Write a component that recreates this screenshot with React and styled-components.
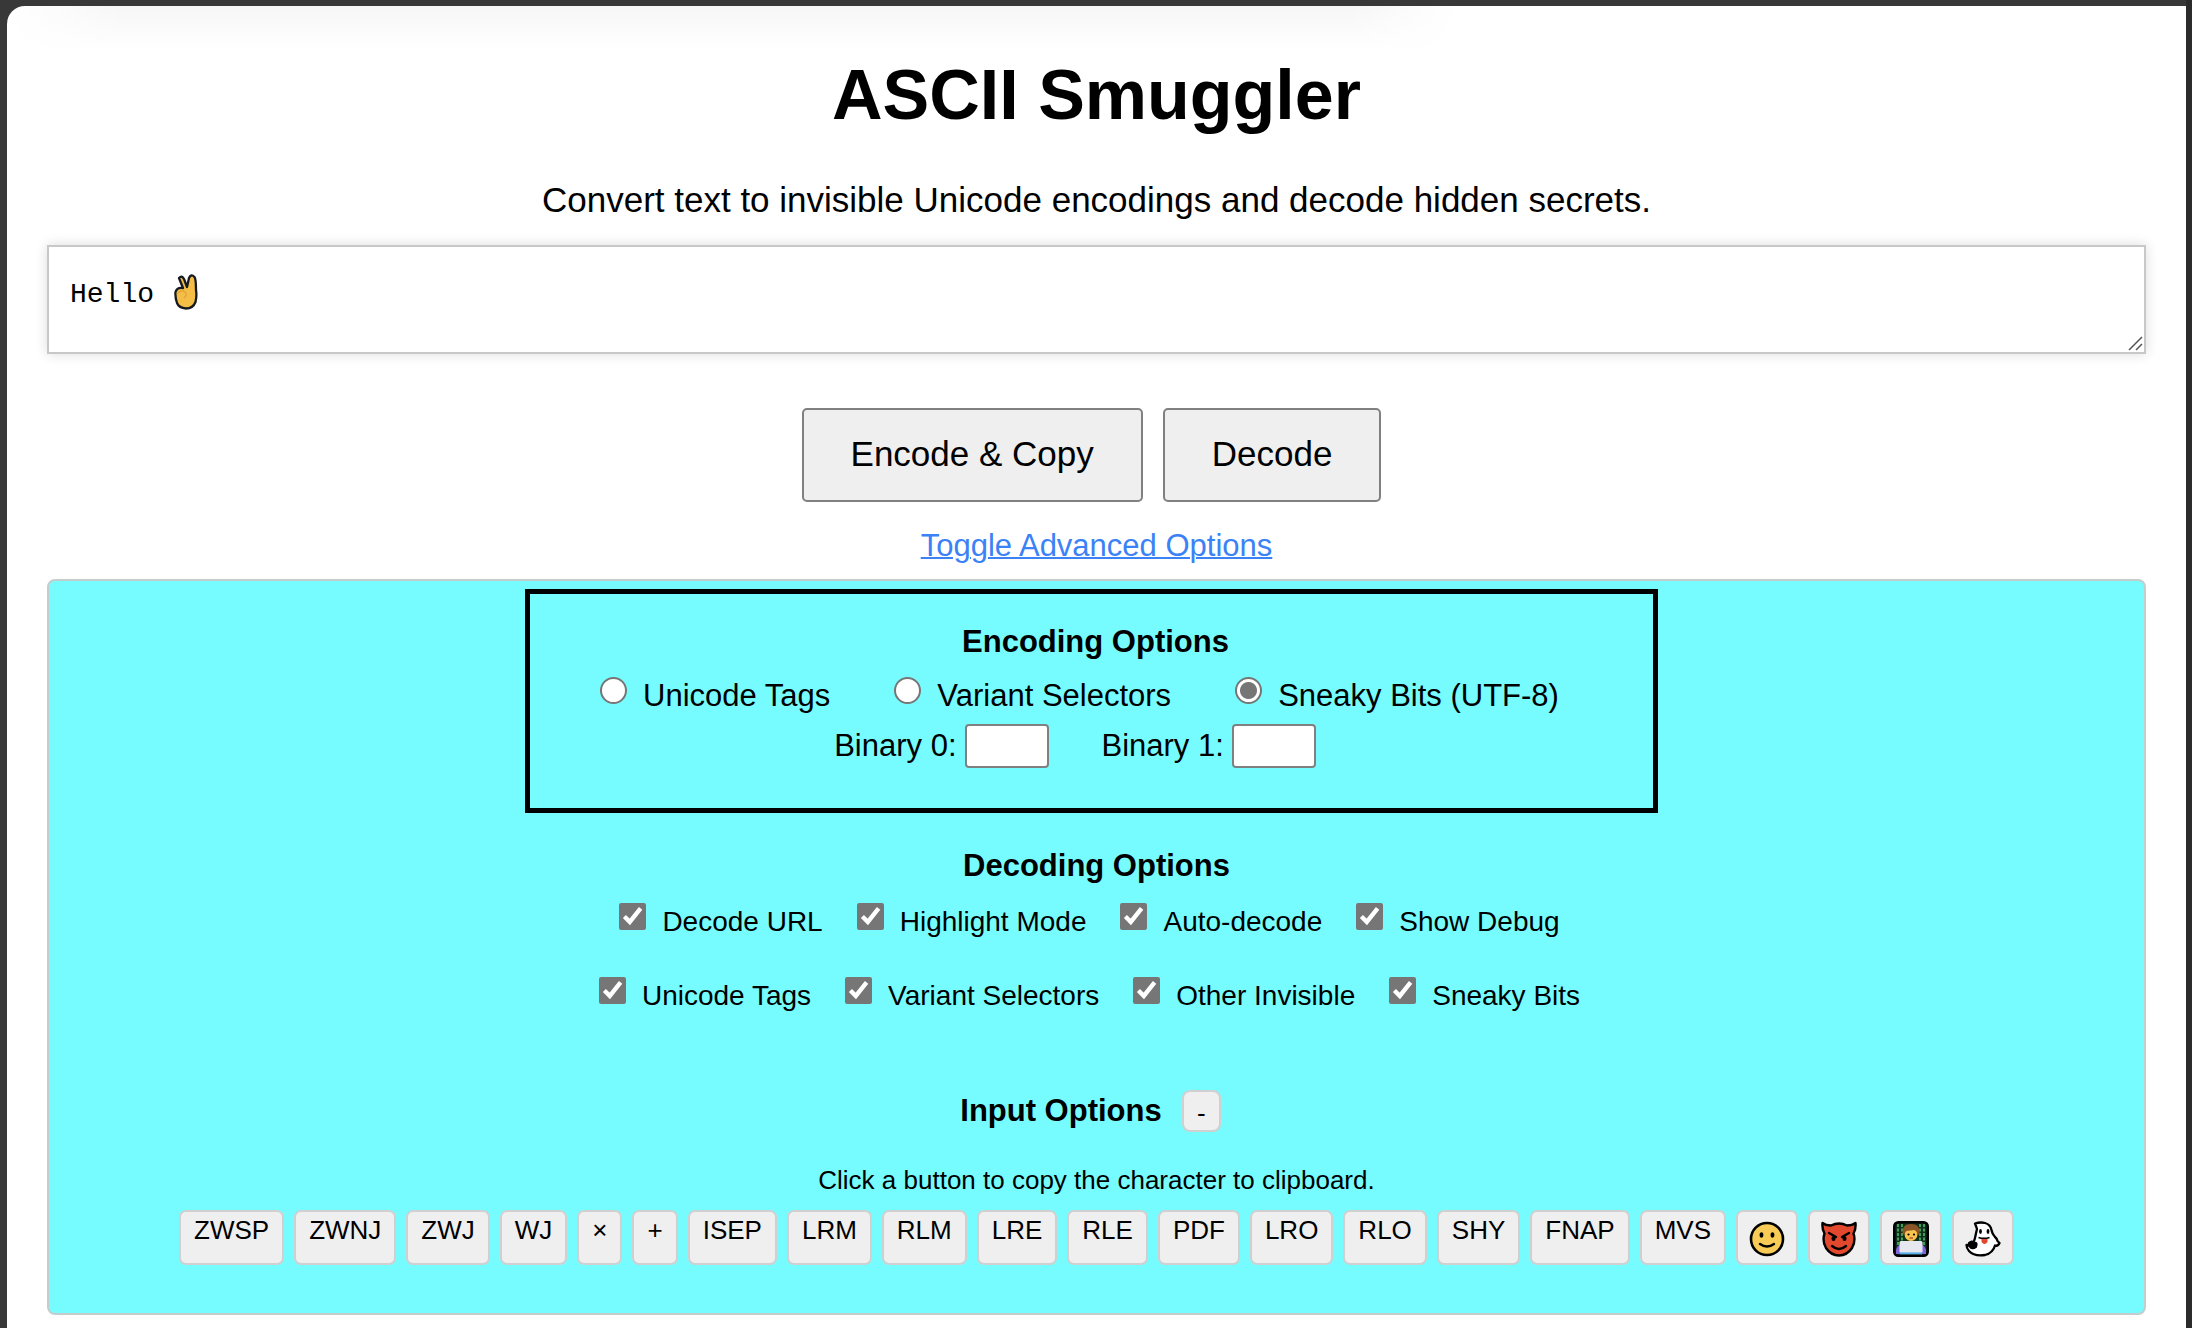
import React from "react";
import styled, { createGlobalStyle } from "styled-components";

const GlobalStyle = createGlobalStyle`
  *, *::before, *::after { box-sizing: border-box; }
  html, body { margin: 0; background: #383838; }
  body { font-family: "Liberation Sans", Arial, sans-serif; color: #000; }
`;

const Frame = styled.div`
  min-height: 100vh;
  display: flex;
  flex-direction: column;
  padding: 6px 0 0 7px;
  border-right: 6px solid #2b2b2b;
  background: #383838;
`;

const Page = styled.main`
  flex: 1;
  display: flex;
  flex-direction: column;
  align-items: stretch;
  padding: 49px 40px 12px;
  border-top-left-radius: 18px;
  background:
    linear-gradient(to right, #fff 0, transparent 120px, transparent 1340px, #fff 1450px) 0 0 / 100% 44px no-repeat,
    linear-gradient(#f6f6f6, #fff) 0 0 / 1450px 44px no-repeat,
    #fff;
`;

const Title = styled.h1`
  margin: 0;
  font-size: 70px;
  line-height: 80px;
  text-align: center;
`;

const Subtitle = styled.p`
  margin: 45px 0 25px;
  font-size: 35px;
  line-height: 40px;
  text-align: center;
`;

const MessageField = styled.div`
  position: relative;
  height: 109px;
`;

const MessageInput = styled.textarea`
  display: block;
  width: 100%;
  height: 100%;
  padding: 30px 21px;
  border: 2px solid #c8c8c8;
  border-radius: 0;
  outline: none;
  overflow: hidden;
  resize: none;
  background: #fff;
  box-shadow: 0 0 12px rgba(0, 0, 0, 0.14);
  color: #000;
  font: 28px/36px "Liberation Mono", monospace;
`;

const HandMark = styled.svg`
  position: absolute;
  left: 127px;
  top: 29px;
  width: 24px;
  height: 36px;
  pointer-events: none;
`;

const Grip = styled.svg`
  position: absolute;
  right: 3px;
  bottom: 3px;
  width: 15px;
  height: 15px;
  pointer-events: none;
`;

const Actions = styled.div`
  display: flex;
  justify-content: center;
  gap: 20px;
  margin-top: 54px;
  padding-right: 10px;
`;

const ActionButton = styled.button`
  height: 94px;
  padding: 0 47px 2px;
  border: 2px solid #808080;
  border-radius: 5px;
  background: #efefef;
  color: #000;
  font: 35px/40px "Liberation Sans", Arial, sans-serif;
`;

const ToggleLink = styled.a`
  align-self: center;
  margin: 27px 0 16px;
  color: #3b82f6;
  font-size: 31px;
  line-height: 34px;
  text-decoration: underline;
  text-decoration-thickness: 2px;
`;

const Panel = styled.section`
  display: flex;
  flex-direction: column;
  align-items: center;
  padding: 8px 0 48px;
  border: 2px solid #c4cccc;
  border-radius: 8px;
  background: #76fcff;
`;

const EncodingBox = styled.section`
  width: 1133px;
  max-width: 100%;
  margin-right: 10px;
  padding: 30px 0 40px 8px;
  border: 5px solid #000;
`;

const Heading = styled.h2`
  margin: 0;
  font-size: 31px;
  line-height: 36px;
  text-align: center;
`;

const RadioRow = styled.div`
  display: flex;
  justify-content: center;
  gap: 64px;
  margin-top: 17px;
  padding-right: 32px;
`;

const Choice = styled.label`
  display: flex;
  align-items: flex-start;
  gap: 16px;
  font-size: ${(p) => (p.$large ? 31 : 28)}px;
  line-height: 38px;
  white-space: nowrap;
`;

const CheckTick = styled.input`
  flex: none;
  width: 27px;
  height: 27px;
  margin: 0;
  accent-color: #767676;
`;

const RadioTick = styled.input`
  flex: none;
  appearance: none;
  width: 27px;
  height: 27px;
  margin: 0;
  border: 2px solid #767676;
  border-radius: 50%;
  background: #fff;

  &:checked {
    background: radial-gradient(circle, #767676 8px, #fff 9px);
  }
`;

const BinaryRow = styled.div`
  display: flex;
  justify-content: center;
  gap: 53px;
  margin-top: 9px;
  padding-right: 41px;
`;

const BinaryLabel = styled.label`
  display: flex;
  align-items: center;
  gap: 8px;
  font-size: 31px;
  line-height: 36px;
`;

const BinaryInput = styled.input`
  width: 84px;
  height: 44px;
  padding: 2px 4px;
  border: 2px solid #808080;
  border-radius: 4px;
  background: #fff;
  font: 28px "Liberation Sans", Arial, sans-serif;
`;

const DecodingGroup = styled.section`
  margin-top: 35px;
`;

const CheckRows = styled.div`
  display: flex;
  flex-direction: column;
  gap: 36px;
  margin-top: 19px;
  padding-right: 14px;
`;

const CheckRow = styled.div`
  display: flex;
  justify-content: center;
  gap: 34px;
`;

const InputHeader = styled.div`
  display: flex;
  align-items: center;
  gap: 20px;
  margin-top: 75px;
  padding-right: 12px;
`;

const CollapseButton = styled.button`
  width: 39px;
  height: 42px;
  padding: 4px 0 0;
  border: 2px solid #d0d0d0;
  border-radius: 8px;
  background: #efefef;
  color: #000;
  font: 26px/30px "Liberation Sans", Arial, sans-serif;
`;

const Hint = styled.p`
  margin: 33px 0 15px;
  font-size: 26px;
  line-height: 30px;
`;

const CharRow = styled.div`
  display: flex;
  flex-wrap: wrap;
  justify-content: center;
  gap: 10px;
`;

const CharButton = styled.button`
  display: flex;
  align-items: ${(p) => (p.$emoji ? "center" : "flex-start")};
  height: 55px;
  padding: ${(p) => (p.$emoji ? "2px 11px 0" : "3px 13px")};
  border: 2px solid #d0d0d0;
  border-radius: 7px;
  background: #efefef;
  color: #000;
  font: 26px/30px "Liberation Sans", Arial, sans-serif;
`;

const EmojiIcon = styled.svg`
  display: block;
  width: 36px;
  height: 36px;
`;

const Smile = () => (
  <EmojiIcon viewBox="0 0 36 36" aria-hidden="true">
    <circle cx="18" cy="18" r="16" fill="#f7cb55" stroke="#000" strokeWidth="2.6" />
    <ellipse cx="12.5" cy="14" rx="1.9" ry="2.8" />
    <ellipse cx="23.5" cy="14" rx="1.9" ry="2.8" />
    <path d="M11 23q7 5 14 0" fill="none" stroke="#000" strokeWidth="2.4" strokeLinecap="round" />
  </EmojiIcon>
);

const Devil = () => (
  <EmojiIcon viewBox="0 0 36 36" aria-hidden="true">
    <path
      d="M1.5 2C4 4 7 4.500 10 4.500Q18 .500 26 4.500C29 4.500 32 4 34.500 2C35 7 34 10 32.500 12.500Q35 20 31 27Q26 34.500 18 34.500Q10 34.500 5 27Q1 20 3.500 12.500C2 10 1 7 1.500 2z"
      fill="#e2482d" stroke="#000" strokeWidth="2.4" strokeLinejoin="round"
    />
    <path d="M8 12l7 4M28 12l-7 4" stroke="#000" strokeWidth="2.4" strokeLinecap="round" />
    <ellipse cx="12.500" cy="17.500" rx="2" ry="2.600" />
    <ellipse cx="23.500" cy="17.500" rx="2" ry="2.600" />
    <path d="M11 25q7 6 14 0" fill="none" stroke="#000" strokeWidth="2.400" strokeLinecap="round" />
  </EmojiIcon>
);

const Coder = () => (
  <EmojiIcon viewBox="0 0 36 36" aria-hidden="true">
    <rect x="1.300" y="1.300" width="33.400" height="33.400" rx="4" fill="#12311d" stroke="#000" strokeWidth="2.600" />
    <path d="M5 3v21M9 3v19M27 3v19M31 3v21" stroke="#43a05c" strokeWidth="2" strokeDasharray="3 1.500" />
    <path d="M3 33v-4q1-5 6-6h18q5 1 6 6v4z" fill="#8064d8" />
    <ellipse cx="18" cy="13" rx="6.500" ry="7" fill="#f9c44d" />
    <path d="M9.500 13C9 6 12 3 18 3c7 0 9 4 8.500 10l-2 1c0-3-2-5-4-5-3 1-7 0-8 2l-1 3z" fill="#8c5528" />
    <circle cx="15.500" cy="13.500" r="1.100" /><circle cx="21" cy="13.500" r="1.100" />
    <path d="M16.500 17h3.500" stroke="#a33c22" strokeWidth="1.200" />
    <rect x="6.500" y="20" width="23" height="12" rx="1.500" fill="#e6e7ef" />
    <path d="M7 32.400h22" stroke="#55aee8" strokeWidth="2" />
  </EmojiIcon>
);

const Ghost = () => (
  <EmojiIcon viewBox="0 0 36 36" aria-hidden="true">
    <path
      d="M10 2.500C13 1.500 17 1.200 20 2Q25.500 3.500 26.500 9C27 12 28 14 30 16Q32 17.500 32.500 20L34.500 22Q33 25.500 30 24.500Q28 32 20 34Q9 35.500 4 30Q1.500 27 1.500 24L5 24Q9 22 10 17Q11 12 12 8Q11 5 10 2.500z"
      fill="#fff" stroke="#000" strokeWidth="2.300" strokeLinejoin="round"
    />
    <path d="M4 22q3-3 5 0q4-1 2 4q-4 3-7-1z" stroke="#000" strokeWidth="2" />
    <ellipse cx="15.500" cy="10.500" rx="1.400" ry="2.400" />
    <ellipse cx="23" cy="10.500" rx="1.400" ry="2.400" />
    <path d="M13.500 16.500q5.500 2 11 0" fill="none" stroke="#000" strokeWidth="1.800" />
    <path d="M16.500 18h6v3q-3 4-6 0z" fill="#e2482d" />
  </EmojiIcon>
);

const encodings = ["Unicode Tags", "Variant Selectors", "Sneaky Bits (UTF-8)"];
const decodings = [
  ["Decode URL", "Highlight Mode", "Auto-decode", "Show Debug"],
  ["Unicode Tags", "Variant Selectors", "Other Invisible", "Sneaky Bits"],
];
const characters = [
  "ZWSP", "ZWNJ", "ZWJ", "WJ", "×", "+", "ISEP", "LRM", "RLM", "LRE", "RLE",
  "PDF", "LRO", "RLO", "SHY", "FNAP", "MVS",
];
const emojis = [
  ["Smile", Smile],
  ["Devil", Devil],
  ["Coder", Coder],
  ["Ghost", Ghost],
];

export default function App() {
  return (
    <>
      <GlobalStyle />
      <Frame>
        <Page>
          <Title>ASCII Smuggler</Title>
          <Subtitle>Convert text to invisible Unicode encodings and decode hidden secrets.</Subtitle>
          <MessageField>
            <MessageInput aria-label="Message" defaultValue="Hello " spellCheck={false} />
            <HandMark viewBox="0 0 24 36" aria-hidden="true">
              <path
                d="M5 4Q8 1 10 5L13 13L15 4Q17-.500 20.500 3Q22 5 22 16Q23 22 21.500 28Q19 34.500 12 34.500Q5 34 3 29Q1 23 1.500 18Q3 13 9 14z"
                fill="#f4bd45" stroke="#151a22" strokeWidth="2.300" strokeLinejoin="round"
              />
              <path d="M3 20q4-5 8-2q3 3-1 6" fill="none" stroke="#dfa23a" strokeWidth="1.200" />
            </HandMark>
            <Grip viewBox="0 0 15 15" aria-hidden="true">
              <path d="M1 14L14 1M8 14l6-6" stroke="#555" strokeWidth="1.500" />
            </Grip>
          </MessageField>
          <Actions>
            <ActionButton type="button">Encode &amp; Copy</ActionButton>
            <ActionButton type="button">Decode</ActionButton>
          </Actions>
          <ToggleLink href="#advanced">Toggle Advanced Options</ToggleLink>

          <Panel id="advanced">
            <EncodingBox>
              <Heading>Encoding Options</Heading>
              <RadioRow>
                {encodings.map((name, i) => (
                  <Choice key={name} $large>
                    <RadioTick type="radio" name="encoding" defaultChecked={i === 2} />
                    {name}
                  </Choice>
                ))}
              </RadioRow>
              <BinaryRow>
                {[0, 1].map((bit) => (
                  <BinaryLabel key={bit}>
                    Binary {bit}:
                    <BinaryInput type="text" />
                  </BinaryLabel>
                ))}
              </BinaryRow>
            </EncodingBox>

            <DecodingGroup>
              <Heading>Decoding Options</Heading>
              <CheckRows>
                {decodings.map((row) => (
                  <CheckRow key={row[0]}>
                    {row.map((name) => (
                      <Choice key={name}>
                        <CheckTick type="checkbox" defaultChecked />
                        {name}
                      </Choice>
                    ))}
                  </CheckRow>
                ))}
              </CheckRows>
            </DecodingGroup>

            <InputHeader>
              <Heading>Input Options</Heading>
              <CollapseButton type="button">-</CollapseButton>
            </InputHeader>
            <Hint>Click a button to copy the character to clipboard.</Hint>
            <CharRow>
              {characters.map((name) => (
                <CharButton key={name} type="button">{name}</CharButton>
              ))}
              {emojis.map(([name, Icon]) => (
                <CharButton key={name} type="button" aria-label={name} $emoji>
                  <Icon />
                </CharButton>
              ))}
            </CharRow>
          </Panel>
        </Page>
      </Frame>
    </>
  );
}
